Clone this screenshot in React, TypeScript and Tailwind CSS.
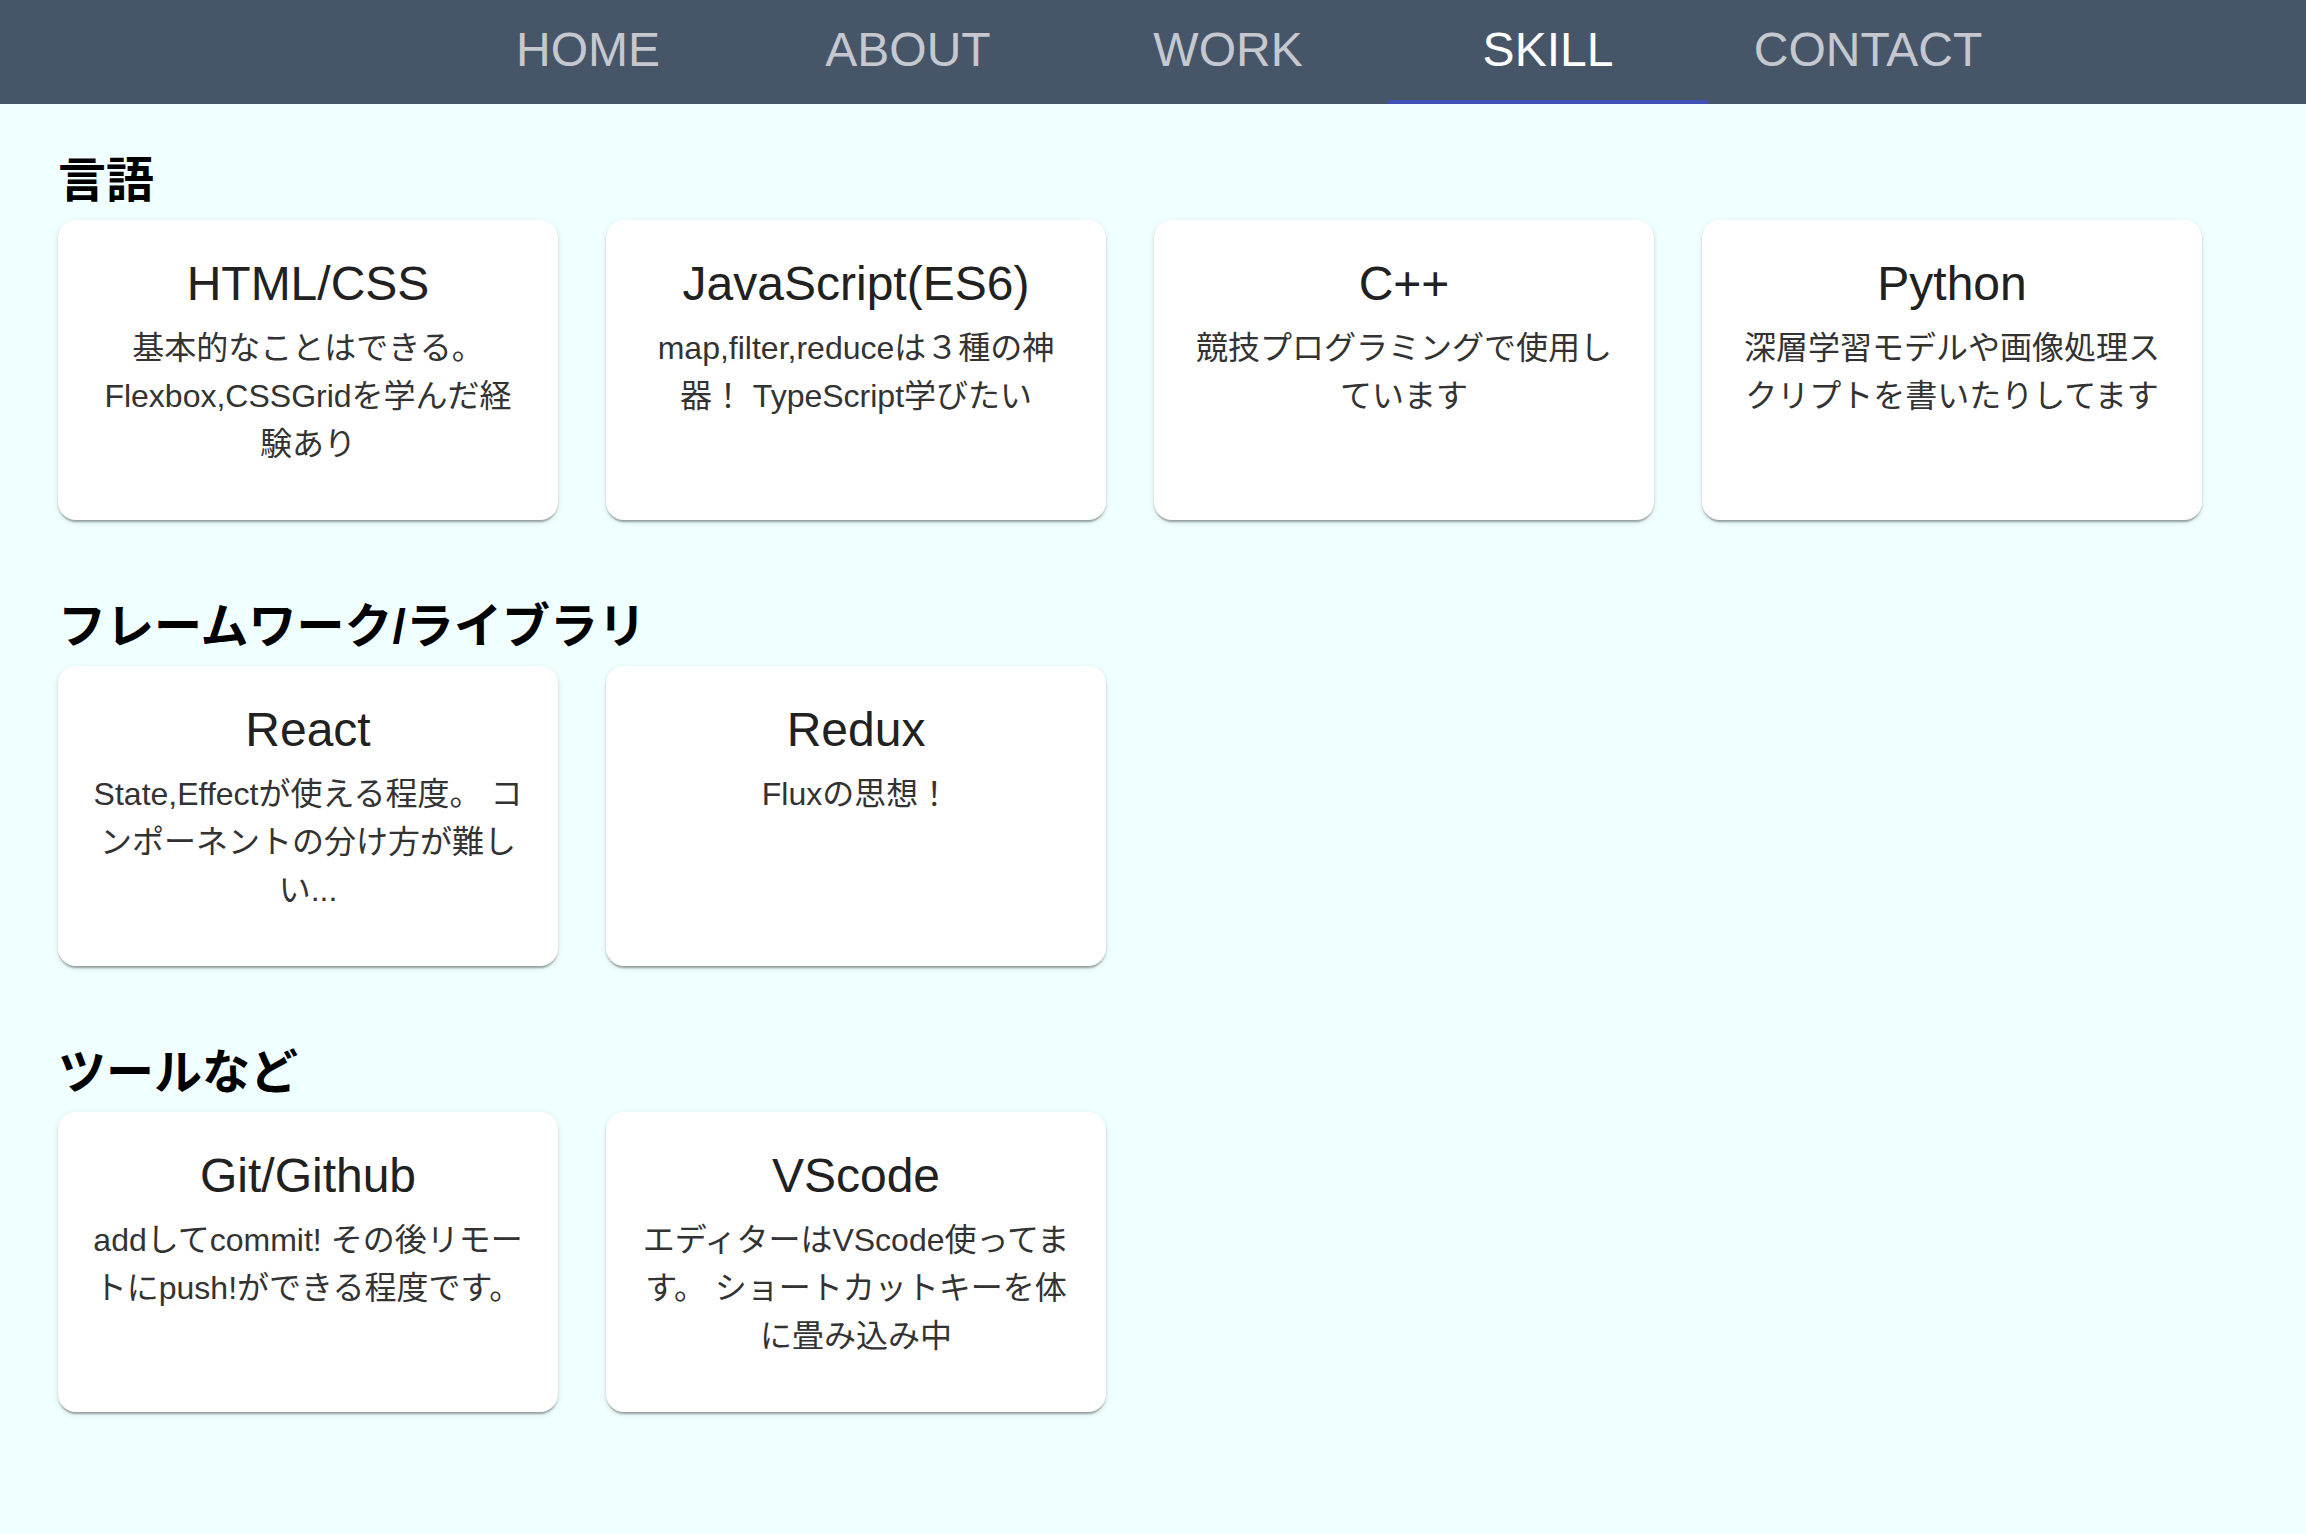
const tabs = ['HOME', 'ABOUT', 'WORK', 'SKILL', 'CONTACT'];

type Skill = { title: string; text: string };

const sections: { heading: string; items: Skill[] }[] = [
  {
    heading: '言語',
    items: [
      { title: 'HTML/CSS', text: '基本的なことはできる。Flexbox,CSSGridを学んだ経験あり' },
      { title: 'JavaScript(ES6)', text: 'map,filter,reduceは３種の神器！ TypeScript学びたい' },
      { title: 'C++', text: '競技プログラミングで使用しています' },
      { title: 'Python', text: '深層学習モデルや画像処理スクリプトを書いたりしてます' },
    ],
  },
  {
    heading: 'フレームワーク/ライブラリ',
    items: [
      { title: 'React', text: 'State,Effectが使える程度。 コンポーネントの分け方が難しい...' },
      { title: 'Redux', text: 'Fluxの思想！' },
    ],
  },
  {
    heading: 'ツールなど',
    items: [
      { title: 'Git/Github', text: 'addしてcommit! その後リモートにpush!ができる程度です。' },
      { title: 'VScode', text: 'エディターはVScode使ってます。 ショートカットキーを体に畳み込み中' },
    ],
  },
];

function SkillCard({ title, text }: Skill) {
  return (
    <div className="h-[300px] w-[500px] rounded-[18px] bg-white p-8 text-center shadow-[0_4px_2px_-2px_rgba(0,0,0,0.2),0_2px_2px_0_rgba(0,0,0,0.14),0_2px_6px_0_rgba(0,0,0,0.12)]">
      <h3 className="mb-2 text-[48px] leading-[64px] text-[#212121]">{title}</h3>
      <p className="text-[32px] leading-[48px] text-[#333333]">{text}</p>
    </div>
  );
}

export default function App() {
  return (
    <div className="min-h-screen bg-[#f0ffff] font-['Liberation_Sans','Noto_Sans_CJK_JP',sans-serif]">
      <nav className="flex h-[104px] bg-[#465568] pl-[428px]">
        {tabs.map((t) => (
          <div
            key={t}
            className={
              t === 'SKILL'
                ? 'flex h-full w-[320px] items-center justify-center border-b-4 border-[#3f51b5] text-[48px] text-white'
                : 'flex h-full w-[320px] items-center justify-center border-b-4 border-transparent text-[48px] text-white/70'
            }
          >
            {t}
          </div>
        ))}
      </nav>

      <main className="flex flex-col gap-[72px] px-[58px] pt-[42px] pb-[100px]">
        {sections.map((s) => (
          <section key={s.heading}>
            <h2 className="mb-[7px] pt-[3px] text-[48px] font-bold leading-[64px] text-black">{s.heading}</h2>
            <div className="flex flex-wrap gap-12">
              {s.items.map((it) => (
                <SkillCard key={it.title} {...it} />
              ))}
            </div>
          </section>
        ))}
      </main>
    </div>
  );
}
